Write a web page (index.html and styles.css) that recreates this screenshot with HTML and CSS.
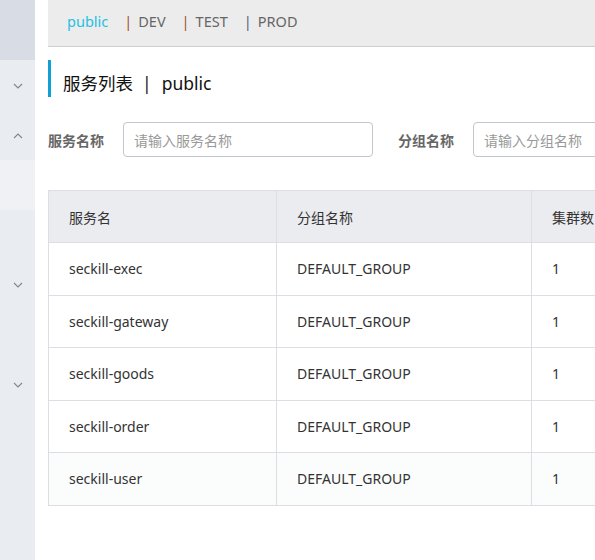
FILE: index.html
```html
<!DOCTYPE html>
<html>
<head>
<meta charset="utf-8">
<link rel="stylesheet" href="styles.css">
</head>
<body>
<div class="app">
  <aside class="sidebar">
    <div class="sb-top"></div>
    <div class="sb-item sb-h52"><svg class="chev" viewBox="0 0 10 6"><path d="M1 1 L5 5 L9 1" /></svg></div>
    <div class="sb-item sb-h48"><svg class="chev" viewBox="0 0 10 6"><path d="M1 5 L5 1 L9 5" /></svg></div>
    <div class="sb-sub"></div>
    <div class="sb-item sb-h150"><svg class="chev" viewBox="0 0 10 6"><path d="M1 1 L5 5 L9 1" /></svg></div>
    <div class="sb-item sb-h100"><svg class="chev" viewBox="0 0 10 6"><path d="M1 1 L5 5 L9 1" /></svg></div>
  </aside>
  <main class="main">
    <nav class="ns-bar">
      <span class="ns active">public</span>
      <span class="sep">|</span><span class="ns">DEV</span>
      <span class="sep">|</span><span class="ns">TEST</span>
      <span class="sep last">|</span><span class="ns">PROD</span>
    </nav>
    <h1 class="title"><span>服务列表</span><span class="tsep">|</span><span>public</span></h1>
    <div class="filters">
      <label class="flabel">服务名称</label>
      <div class="input"><span>请输入服务名称</span></div>
      <label class="flabel second">分组名称</label>
      <div class="input"><span>请输入分组名称</span></div>
    </div>
    <table class="tbl">
      <colgroup><col class="c1"><col class="c2"><col class="c3"></colgroup>
      <thead><tr><th>服务名</th><th>分组名称</th><th>集群数目</th></tr></thead>
      <tbody>
        <tr><td>seckill-exec</td><td>DEFAULT_GROUP</td><td>1</td></tr>
        <tr><td>seckill-gateway</td><td>DEFAULT_GROUP</td><td>1</td></tr>
        <tr><td>seckill-goods</td><td>DEFAULT_GROUP</td><td>1</td></tr>
        <tr><td>seckill-order</td><td>DEFAULT_GROUP</td><td>1</td></tr>
        <tr class="hover"><td>seckill-user</td><td>DEFAULT_GROUP</td><td>1</td></tr>
      </tbody>
    </table>
  </main>
</div>
</body>
</html>
```
FILE: styles.css
```css
* { box-sizing: border-box; }
html, body { margin: 0; padding: 0; background: #fff; }
body {
  font-family: "Noto Sans", "Noto Sans CJK SC", sans-serif;
  color: #333;
  width: 595px;
  height: 560px;
  overflow: hidden;
}
.app { display: flex; height: 560px; }
.sidebar {
  width: 35px;
  flex: none;
  background: #e9ecf1;
  display: flex;
  flex-direction: column;
}
.sb-top { height: 60px; background: #d8dde5; }
.sb-item { display: flex; justify-content: center; align-items: center; }
.sb-h52 { height: 52px; }
.sb-h48 { height: 48px; }
.sb-sub { height: 50px; background: #eff1f5; }
.sb-h150 { height: 150px; }
.sb-h100 { height: 50px; }
.chev { width: 10px; height: 6px; fill: none; stroke: #7b8794; stroke-width: 1.1; }
.main { flex: 1; padding-left: 13px; overflow: hidden; min-width: 0; }
.ns-bar {
  height: 47px;
  background: #ececec;
  border-bottom: 1px solid #cfcfcf;
  display: flex;
  align-items: center;
  padding: 0 0 4px 19px;
  font-size: 14.5px;
  white-space: nowrap;
}
.ns { color: #666; }
.ns.active { color: #25c0e3; }
.sep { color: #a0522d; margin: 0 6px 0 0; }
.sep.last { color: #50607a; }
.ns-bar .ns + .sep { margin-left: 16px; }
.title {
  margin: 13px 0 0 0;
  height: 37px;
  border-left: 3px solid #0fa0d4;
  padding: 8px 0 0 12px;
  display: flex;
  align-items: center;
  font-size: 17.5px;
  font-weight: normal;
  color: #111;
  white-space: nowrap;
}
.tsep { margin: 0 10px 0 9px; }
.filters {
  display: flex;
  align-items: center;
  margin-top: 25px;
  white-space: nowrap;
}
.flabel { font-size: 14px; font-weight: bold; color: #666; width: 75px; flex: none; }
.flabel.second { margin-left: 25px; }
.input {
  width: 250px;
  height: 35px;
  flex: none;
  border: 1px solid #c4c6cf;
  border-radius: 4px;
  display: flex;
  align-items: center;
  padding-left: 10px;
  font-size: 14px;
  color: #999;
}
.tbl {
  margin-top: 33px;
  border-collapse: collapse;
  table-layout: fixed;
  width: 800px;
  font-size: 14px;
}
.c1 { width: 228px; }
.c2 { width: 255px; }
.c3 { width: 317px; }
.tbl th, .tbl td {
  border: 1px solid #dcdee3;
  text-align: left;
  font-weight: normal;
  padding: 0 0 0 20px;
  height: 52.5px;
  color: #333;
  white-space: nowrap;
}
.tbl th { background: #ebecf0; height: 52px; }
.tbl tr.hover td { background: #fbfdfd; }
```
